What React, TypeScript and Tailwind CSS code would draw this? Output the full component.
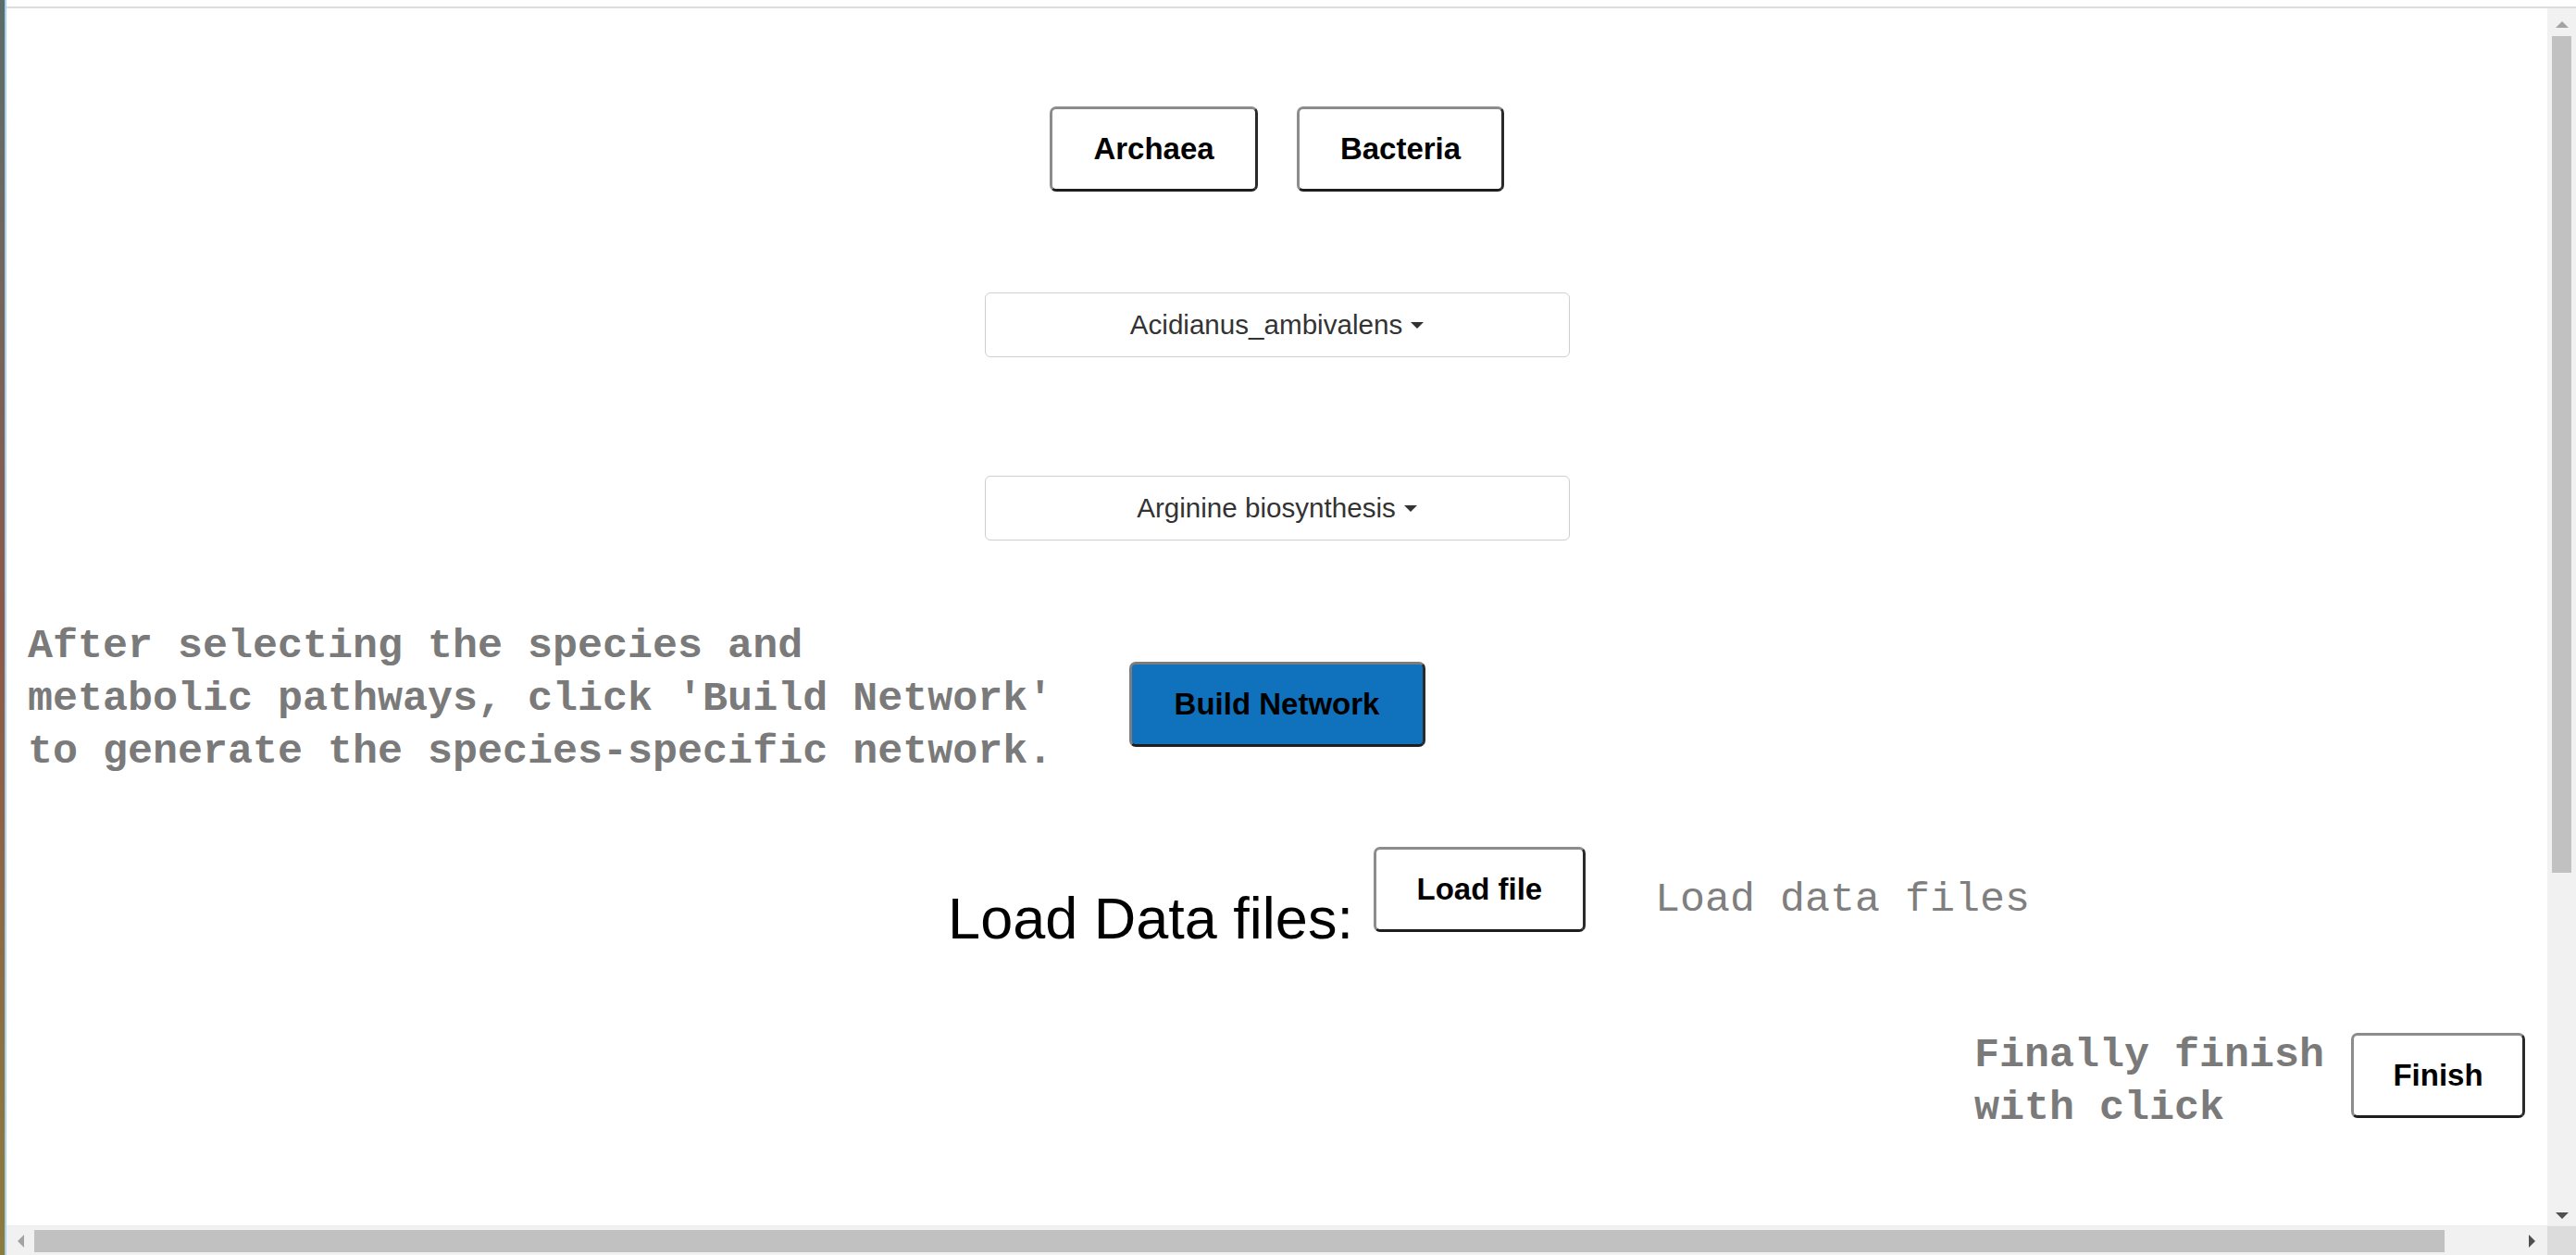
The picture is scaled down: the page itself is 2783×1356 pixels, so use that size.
import React from "react";

const sans = { fontFamily: '"Liberation Sans", Arial, sans-serif' };
const mono = { fontFamily: '"Liberation Mono", "Courier New", monospace' };

function Tri({ dir, color }: { dir: "up" | "down" | "left" | "right"; color: string }) {
  const pts =
    dir === "up"
      ? "0,7 14,7 7,0"
      : dir === "down"
      ? "0,0 14,0 7,7"
      : dir === "left"
      ? "7,0 7,14 0,7"
      : "0,0 0,14 7,7";
  const w = dir === "up" || dir === "down" ? 14 : 7;
  const h = dir === "up" || dir === "down" ? 7 : 14;
  return (
    <svg width={w} height={h} viewBox={`0 0 ${w} ${h}`}>
      <polygon points={pts} fill={color} />
    </svg>
  );
}

function PlainButton({ children, className = "" }: { children: React.ReactNode; className?: string }) {
  return (
    <button
      className={`h-[92px] rounded-[7px] border-[3px] border-t-[#8c8c8c] border-l-[#8c8c8c] border-r-[#2a2a2a] border-b-[#1e1e1e] bg-white text-[33px] font-bold text-black ${className}`}
      style={sans}
    >
      {children}
    </button>
  );
}

function Dropdown({ label }: { label: string }) {
  return (
    <div
      className="flex h-[70px] w-[632px] items-center justify-center gap-[9px] rounded-[6px] border border-[#cfcfcf] bg-white text-[29.6px] text-[#333]"
      style={sans}
    >
      <span>{label}</span>
      <Tri dir="down" color="#333" />
    </div>
  );
}

export default function App() {
  return (
    <div className="flex h-[1356px] w-[2783px] overflow-hidden bg-white">
      {/* window edge */}
      <div className="w-[5px] bg-gradient-to-b from-[#5b6d69] via-[#8d5847] to-[#8c7c3c]" />
      <div className="w-[2px] bg-[#a6d2f2]" />

      <div className="flex flex-1 flex-col">
        <div className="h-[7px] bg-white" />
        <div className="h-[2px] bg-[#dcdcdc]" />

        <div className="flex min-h-0 flex-1">
          {/* page */}
          <div className="flex flex-1 flex-col">
            <div className="mt-[106px] flex justify-center gap-[42px]">
              <PlainButton className="w-[225px]">Archaea</PlainButton>
              <PlainButton className="w-[224px]">Bacteria</PlainButton>
            </div>

            <div className="mt-[109px] flex justify-center">
              <Dropdown label="Acidianus_ambivalens" />
            </div>

            <div className="mt-[128px] flex justify-center">
              <Dropdown label="Arginine biosynthesis" />
            </div>

            <div className="mt-[86px] grid grid-cols-[1fr_auto_1fr] items-start">
              <p
                className="pl-[23px] text-[45px] font-bold leading-[57px] text-[#7a7a7a]"
                style={mono}
              >
                After selecting the species and
                <br />
                metabolic pathways, click 'Build Network'
                <br />
                to generate the species-specific network.
              </p>
              <button
                className="mt-[45px] h-[92px] w-[320px] rounded-[7px] border-[3px] border-t-[#7d7d7d] border-l-[#7d7d7d] border-r-[#2a2a2a] border-b-[#1e1e1e] bg-[#1071bd] text-[33px] font-bold text-black"
                style={sans}
              >
                Build Network
              </button>
              <div />
            </div>

            <div className="mt-[74px] grid grid-cols-[1fr_auto_1fr] items-start">
              <div />
              <div className="mr-[22px] flex items-start gap-[22px]">
                <span className="mt-[46px] text-[63px] leading-none text-black" style={sans}>
                  Load Data files:
                </span>
                <PlainButton className="w-[229px]">Load file</PlainButton>
              </div>
              <span className="ml-[53px] mt-[35px] text-[45px] leading-none text-[#7f7f7f]" style={mono}>
                Load data files
              </span>
            </div>

            <div className="mt-[88px] flex items-start justify-end gap-[29px] pr-[24px]">
              <p className="text-[45px] font-bold leading-[57px] text-[#7a7a7a]" style={mono}>
                Finally finish
                <br />
                with click
              </p>
              <PlainButton className="mt-[4px] w-[188px]">Finish</PlainButton>
            </div>
          </div>

          {/* vertical scrollbar */}
          <div className="flex w-[31px] flex-col bg-[#f1f1f1]">
            <div className="flex h-[30px] items-center justify-center pt-[4px]">
              <Tri dir="up" color="#a3a3a3" />
            </div>
            <div className="mx-[5px] h-[904px] bg-[#c1c1c1]" />
            <div className="flex-1" />
            <div className="flex h-[22px] items-center justify-center">
              <Tri dir="down" color="#505050" />
            </div>
          </div>
        </div>

        {/* horizontal scrollbar */}
        <div className="flex h-[32px] border-t border-[#ececec] bg-[#f1f1f1]">
          <div className="flex w-[30px] items-center justify-center">
            <Tri dir="left" color="#a3a3a3" />
          </div>
          <div className="h-[24px] w-[2604px] self-center bg-[#c1c1c1]" />
          <div className="flex flex-1 items-center justify-end pr-[13px]">
            <Tri dir="right" color="#505050" />
          </div>
          <div className="w-[31px] bg-[#dcdcdc]" />
        </div>
      </div>
    </div>
  );
}
